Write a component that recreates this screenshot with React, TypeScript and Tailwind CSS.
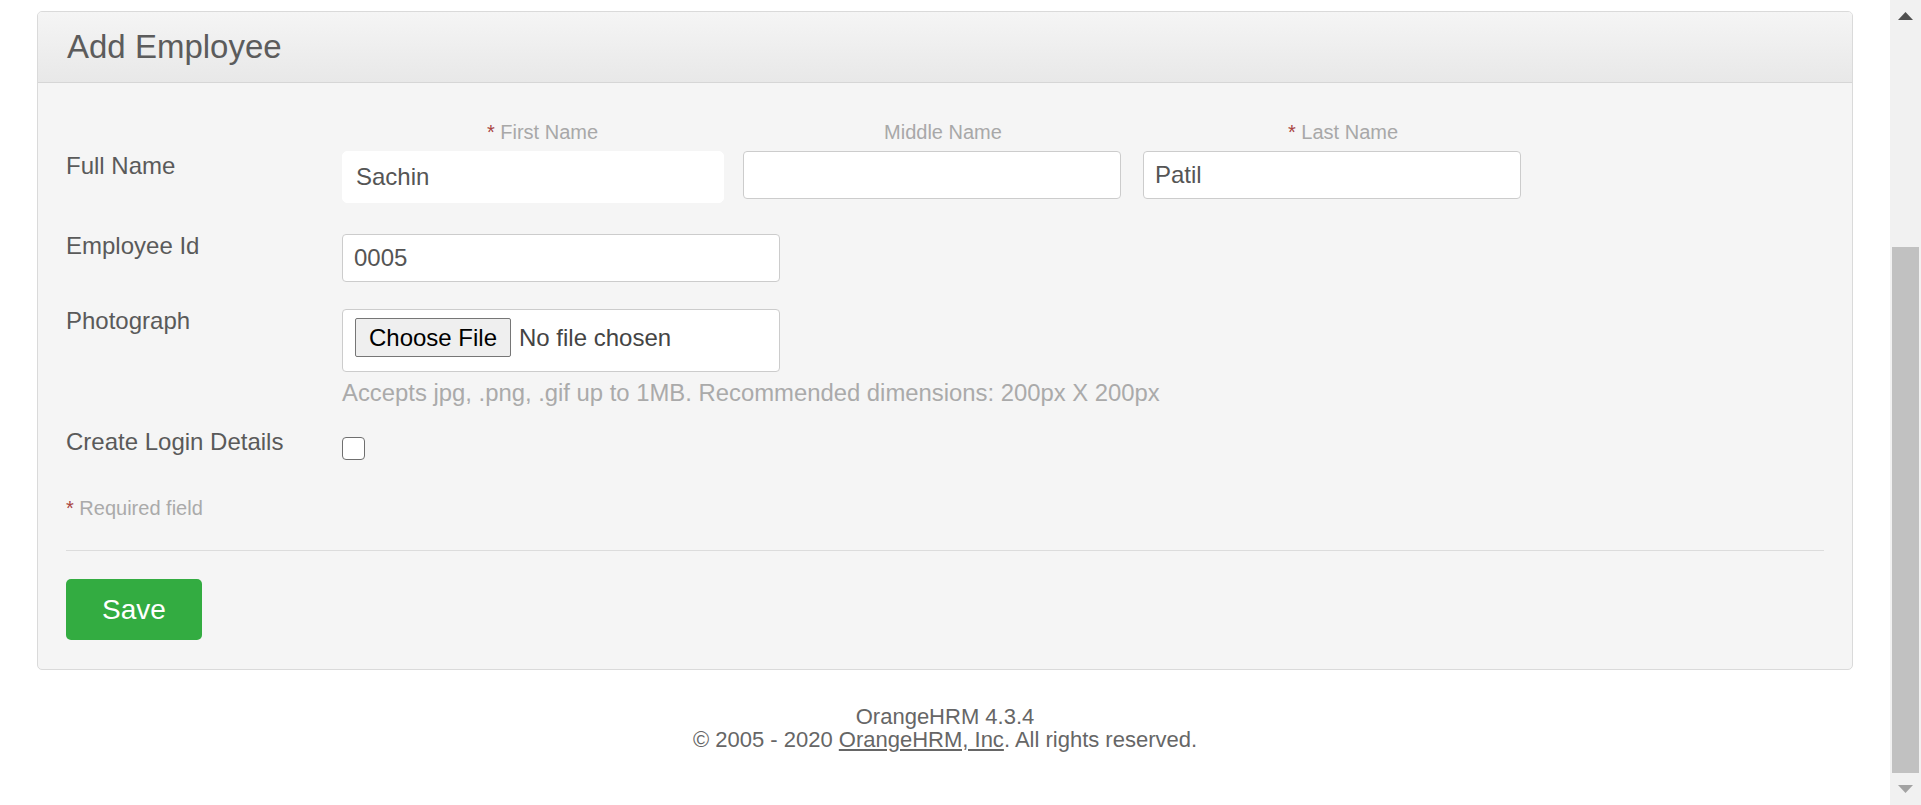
export default function App() {
  const label = "text-[24px] leading-[22px] text-[#5a5a5a]";
  return (
    <div className="flex h-[805px] w-full overflow-hidden bg-white font-['Liberation_Sans',Arial,sans-serif]">
      <div className="flex flex-1 flex-col">
        <div className="mx-[37px] mt-[11px] overflow-hidden rounded-[5px] border border-[#dadada] bg-[#f5f5f5]">
          <div className="flex h-[71px] items-center border-b border-[#d6d6d6] bg-gradient-to-b from-[#f5f5f5] to-[#e8e8e8] pb-[2px] pl-[29px]">
            <h1 className="text-[33px] leading-[33px] text-[#5c5c5c]">Add Employee</h1>
          </div>
          <div className="px-[28px] pt-[37px] pb-[29px]">
            {/* Full Name */}
            <div className="flex">
              <div className={`w-[276px] pt-[35px] ${label}`}>Full Name</div>
              <div className="flex">
                <div className="w-[401px]">
                  <div className="text-center text-[20px] leading-[24px] text-[#a8a8a8]">
                    <span className="text-[#a94442]">*</span> First Name
                  </div>
                  <div className="mt-[7px] flex h-[52px] w-[382px] items-center rounded-[5px] border border-white bg-white pl-[13px] text-[24px] text-[#555]">
                    Sachin
                  </div>
                </div>
                <div className="w-[400px]">
                  <div className="text-center text-[20px] leading-[24px] text-[#a8a8a8]">Middle Name</div>
                  <div className="mt-[7px] h-[48px] w-[378px] rounded-[4px] border border-[#cccccc] bg-white" />
                </div>
                <div className="w-[400px]">
                  <div className="text-center text-[20px] leading-[24px] text-[#a8a8a8]">
                    <span className="text-[#a94442]">*</span> Last Name
                  </div>
                  <div className="mt-[7px] flex h-[48px] w-[378px] items-center rounded-[4px] border border-[#cccccc] bg-white pl-[11px] text-[24px] text-[#555]">
                    Patil
                  </div>
                </div>
              </div>
            </div>

            {/* Employee Id */}
            <div className="mt-[31px] flex">
              <div className={`w-[276px] pt-[1px] ${label}`}>Employee Id</div>
              <div className="flex h-[48px] w-[438px] items-center rounded-[4px] border border-[#cccccc] bg-white pl-[11px] text-[24px] text-[#555]">
                0005
              </div>
            </div>

            {/* Photograph */}
            <div className="mt-[27px] flex">
              <div className={`w-[276px] pt-[1px] ${label}`}>Photograph</div>
              <div>
                <div className="flex h-[63px] w-[438px] items-start rounded-[4px] border border-[#cccccc] bg-white pt-[8px] pl-[12px]">
                  <div className="flex h-[39px] w-[156px] items-center justify-center rounded-[2px] border border-[#767676] bg-[#efefef] text-[24px] text-black">
                    Choose File
                  </div>
                  <div className="ml-[8px] flex h-[39px] items-center text-[24px] text-[#444]">No file chosen</div>
                </div>
                <div className="mt-[9px] text-[23.85px] leading-[24px] text-[#aaaaaa]">
                  Accepts jpg, .png, .gif up to 1MB. Recommended dimensions: 200px X 200px
                </div>
              </div>
            </div>

            {/* Create Login Details */}
            <div className="mt-[26px] flex">
              <div className={`w-[276px] ${label}`}>Create Login Details</div>
              <div className="pt-[6px]">
                <div className="h-[23px] w-[23px] rounded-[4px] border border-[#6f6f6f] bg-white" />
              </div>
            </div>

            <div className="mt-[36px] text-[20px] leading-[24px] text-[#aaaaaa]">
              <span className="text-[#a94442]">*</span> Required field
            </div>

            <div className="mt-[30px] h-px bg-[#dcdcdc]" />

            <button className="mt-[28px] flex h-[61px] w-[136px] items-center justify-center rounded-[5px] bg-[#33ac41] text-[28px] text-white">
              Save
            </button>
          </div>
        </div>

        <div className="mt-[35px] text-center text-[22px] leading-[23px] text-[#666666]">
          <div>OrangeHRM 4.3.4</div>
          <div>
            © 2005 - 2020 <span className="underline">OrangeHRM, Inc</span>. All rights reserved.
          </div>
        </div>
      </div>

      {/* scrollbar */}
      <div className="flex h-full w-[31px] flex-col items-center bg-[#f1f1f1]">
        <svg className="mt-[12px]" width="15" height="8" viewBox="0 0 15 8">
          <polygon points="7.5,0 15,8 0,8" fill="#505050" />
        </svg>
        <div className="mt-[227px] h-[526px] w-[27px] bg-[#c1c1c1]" />
        <svg className="mt-[12px]" width="15" height="8" viewBox="0 0 15 8">
          <polygon points="0,0 15,0 7.5,8" fill="#a3a3a3" />
        </svg>
      </div>
    </div>
  );
}
